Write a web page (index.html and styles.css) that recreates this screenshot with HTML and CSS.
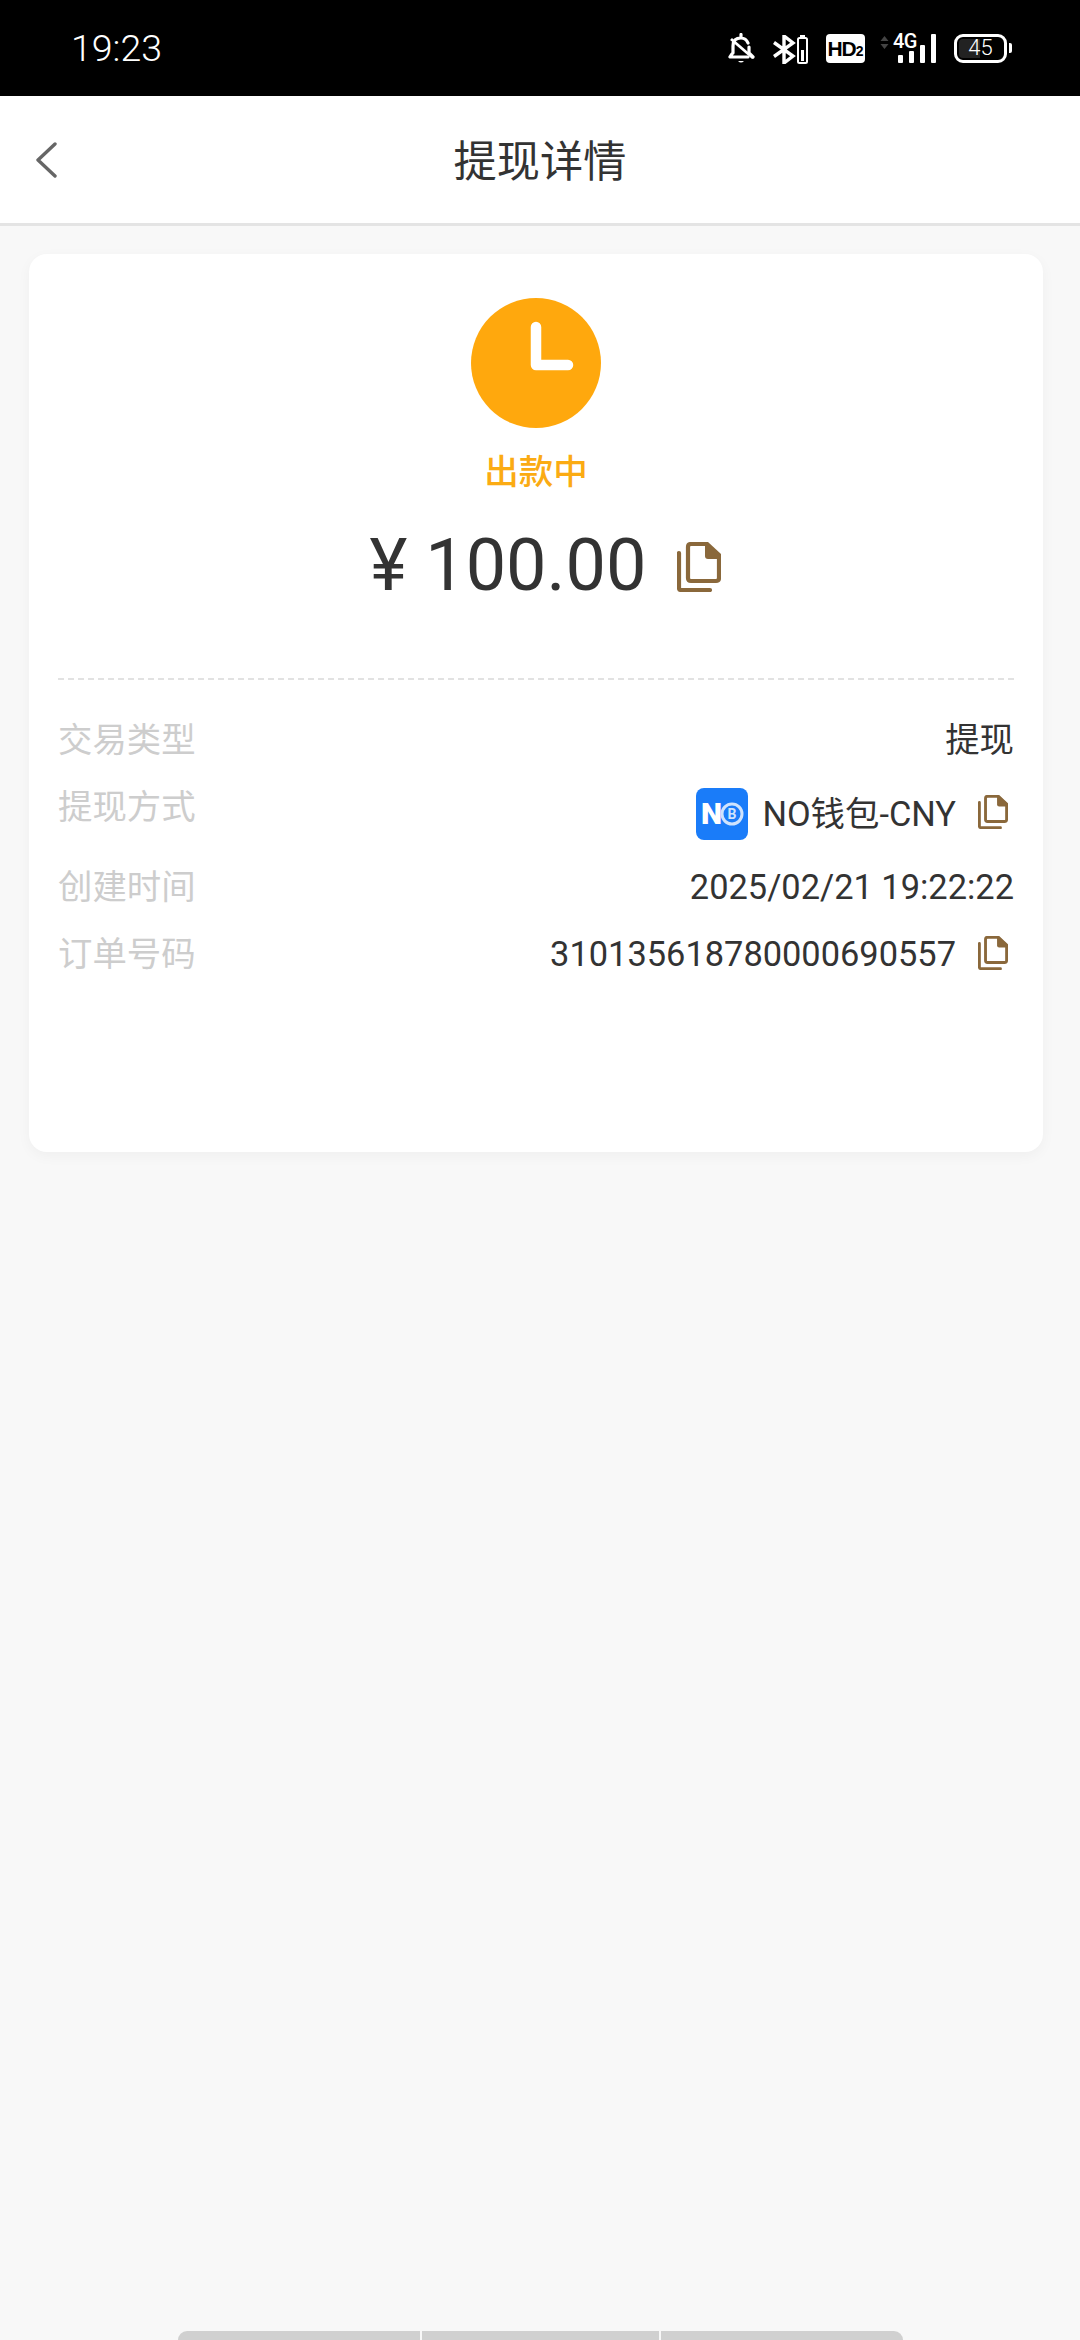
FILE: index.html
```html
<!DOCTYPE html>
<html lang="zh-CN">
<head>
<meta charset="utf-8">
<title>提现详情</title>
<link rel="stylesheet" href="styles.css">
</head>
<body>
<svg class="defs" width="0" height="0" aria-hidden="true">
  <symbol id="copy" viewBox="0 0 44 50">
    <path d="M2 11V46Q2 48 4 48H33" fill="none" stroke="currentColor" stroke-width="4.200" stroke-linecap="round"/>
    <path d="M11 5Q11 2 14 2H29L42 14V36Q42 39 39 39H14Q11 39 11 36Z" fill="none" stroke="currentColor" stroke-width="4.200" stroke-linejoin="round"/>
    <path d="M28 0H31L44 12V17H31Q28 17 28 14Z" fill="currentColor"/>
  </symbol>
</svg>
<div class="page">
  <header class="status">
    <span class="clock">19:23</span>
    <div class="indicators">
      <svg class="ic-bell" width="27" height="31" viewBox="0 0 27 31"><path d="M13 1.500V4M5 20V13Q5 5 13 5Q18 5 20 10M21 14V20L25 24M4 21L2 24H20" fill="none" stroke="#fff" stroke-width="3.200" stroke-linecap="round" stroke-linejoin="round"/><path d="M3 6L25 25" stroke="#fff" stroke-width="2.800"/><path d="M10 28Q13 31 16 28Z" fill="#fff"/></svg>
      <svg class="ic-bt" width="35" height="29" viewBox="0 0 35 29"><path d="M1 7.500L20 21L11 28V1L20 8L1 21.500" fill="none" stroke="#fff" stroke-width="3.400"/><rect x="25" y="3" width="9" height="25" rx="1.500" fill="none" stroke="#fff" stroke-width="2"/><rect x="27" y="0" width="5" height="2" fill="#fff"/><rect x="28" y="15" width="3" height="11" fill="#fff"/></svg>
      <span class="hd">HD<small>2</small></span>
      <div class="signal">
        <svg class="arrows" width="9" height="15" viewBox="0 0 9 15"><path d="M0.500 6L4.500 1L8.500 6ZM0.500 9L4.500 14L8.500 9Z" fill="#444"/></svg>
        <span class="net">4G</span>
        <div class="bars"><i class="b1"></i><i class="b2"></i><i class="b3"></i><i class="b4"></i></div>
      </div>
      <div class="battery">
        <div class="cell"><span class="level"></span><span class="pct">45</span></div>
        <span class="tip"></span>
      </div>
    </div>
  </header>

  <nav class="nav">
    <svg class="back" width="22" height="36" viewBox="0 0 22 36"><path d="M20 2L3 18L20 34" fill="none" stroke="#666" stroke-width="3.400" stroke-linecap="round" stroke-linejoin="round"/></svg>
    <h1 class="title">提现详情</h1>
  </nav>

  <main class="content">
    <section class="card">
      <div class="summary">
        <svg class="state" width="130" height="130" viewBox="0 0 130 130"><circle cx="65" cy="65" r="65" fill="#ffa80d"/><path d="M65 29V67H97" fill="none" stroke="#fff" stroke-width="10.500" stroke-linecap="round" stroke-linejoin="round"/></svg>
        <div class="state-text">出款中</div>
        <div class="amount">
          <span class="money">¥ 100.00</span>
          <svg class="copy copy-lg"><use href="#copy"/></svg>
        </div>
      </div>
      <div class="rows">
        <div class="row"><span class="label">交易类型</span><span class="value">提现</span></div>
        <div class="row row-tall">
          <span class="label">提现方式</span>
          <span class="value value-icons">
            <svg class="logo" width="52" height="52" viewBox="0 0 52 52"><rect width="52" height="52" rx="8" fill="#1a7cf9"/><text x="5" y="36" class="logo-n">N</text><circle cx="36" cy="26" r="10" fill="none" stroke="#cfe3fd" stroke-width="3"/><text x="36" y="31" class="logo-b">B</text></svg>
            <span>NO钱包-CNY</span>
            <svg class="copy copy-sm"><use href="#copy"/></svg>
          </span>
        </div>
        <div class="row"><span class="label">创建时间</span><span class="value">2025/02/21 19:22:22</span></div>
        <div class="row">
          <span class="label">订单号码</span>
          <span class="value value-icons"><span>310135618780000690557</span><svg class="copy copy-sm"><use href="#copy"/></svg></span>
        </div>
      </div>
    </section>
  </main>

  <div class="gesture"><i></i><i></i><i></i></div>
</div>
</body>
</html>
```

FILE: styles.css
```css
* { box-sizing: border-box; }
html, body { margin: 0; padding: 0; }
body {
  width: 1080px;
  height: 2340px;
  background: #f8f8f8;
  color: #333;
  font-family: Roboto, "Noto Sans CJK SC", sans-serif;
  overflow: hidden;
}
.defs { position: absolute; }
.page { display: flex; flex-direction: column; height: 2340px; }

.status {
  height: 96px;
  background: #000;
  color: #fff;
  display: flex;
  align-items: center;
  justify-content: space-between;
  padding: 0 68px 0 71px;
  flex: none;
}
.clock { font-size: 37.500px; font-weight: 300; letter-spacing: 0; }
.indicators { display: flex; align-items: center; }
.ic-bell { margin-right: 18px; }
.ic-bt { margin-right: 18px; margin-top: 2px; }
.hd {
  width: 39px;
  height: 29px;
  background: #fff;
  color: #000;
  border-radius: 4px;
  font-family: "Liberation Sans", sans-serif;
  font-weight: 700;
  font-size: 21px;
  letter-spacing: -1px;
  display: flex;
  align-items: baseline;
  justify-content: center;
  line-height: 29px;
  margin-right: 15px;
}
.hd small { font-size: 14px; letter-spacing: 0; }
.signal { position: relative; width: 56px; height: 29px; margin-right: 18px; display: flex; }
.arrows { margin-top: 1px; }
.net {
  font-size: 20px;
  font-weight: 500;
  line-height: 15px;
  margin-left: 4px;
  letter-spacing: -0.5px;
}
.bars {
  position: absolute;
  left: 18px;
  bottom: 0;
  display: flex;
  align-items: flex-end;
  gap: 6px;
}
.bars i { display: block; width: 5px; background: #fff; border-radius: 1px; }
.bars .b1 { height: 8px; }
.bars .b2 { height: 12px; }
.bars .b3 { height: 18px; }
.bars .b4 { height: 29px; }
.battery { display: flex; align-items: center; gap: 2px; }
.cell {
  position: relative;
  width: 53px;
  height: 29px;
  border: 3px solid #fff;
  border-radius: 9px;
  display: flex;
  align-items: center;
  justify-content: center;
  overflow: hidden;
}
.level { position: absolute; left: 2px; top: 2px; bottom: 2px; width: 21px; background: #222; border-radius: 4px 0 0 4px; }
.pct { position: relative; font-size: 22px; font-weight: 300; line-height: 1; }
.tip { width: 3px; height: 10px; background: #fff; border-radius: 0 2px 2px 0; }

.nav {
  position: relative;
  height: 130px;
  background: #fff;
  border-bottom: 3px solid #e4e4e4;
  display: flex;
  align-items: center;
  justify-content: center;
  padding-bottom: 3px;
  flex: none;
}
.back { position: absolute; left: 35px; top: 46px; }
.title { margin: 0; font-size: 43.200px; font-weight: 400; color: #333; }

.content { flex: 1; padding: 28px 37px 0 29px; }
.card {
  height: 898px;
  background: #fff;
  border-radius: 18px;
  box-shadow: 0 4px 14px rgba(0, 0, 0, 0.04);
  padding: 44px 29px 0;
}
.summary {
  display: flex;
  flex-direction: column;
  align-items: center;
  height: 382px;
  border-bottom: 2px dashed #e2e2e2;
}
.state { display: block; }
.state-text {
  margin-top: 22px;
  font-size: 34.500px;
  font-weight: 500;
  line-height: 44px;
  color: #fbab13;
}
.amount {
  display: flex;
  align-items: center;
  margin-top: 28px;
  padding-left: 18px;
}
.money { font-size: 72px; line-height: 88px; color: #333; }
.copy { display: block; color: #8a683b; }
.copy-lg { width: 44px; height: 50px; margin-left: 30px; margin-top: 2px; }
.copy-sm { width: 30px; height: 34px; margin-left: 22px; margin-right: 6px; margin-top: -4px; }

.rows { display: flex; flex-direction: column; gap: 20px; padding-top: 37px; }
.row {
  display: flex;
  justify-content: space-between;
  align-items: flex-start;
  font-size: 34.400px;
  line-height: 47px;
  min-height: 47px;
}
.row-tall { min-height: 60px; }
.label { color: #cdcdcd; }
.value { color: #333; }
.value-icons { display: flex; align-items: center; height: 47px; }
.row-tall .value-icons { height: 60px; }
.logo { margin-right: 14px; display: block; }
.logo-n { font-family: Roboto, sans-serif; font-weight: 900; font-size: 30px; fill: #fff; }
.logo-b { font-family: Roboto, sans-serif; font-weight: 700; font-size: 14px; fill: #cfe3fd; text-anchor: middle; }

.gesture {
  flex: none;
  align-self: flex-start;
  margin-left: 178px;
  width: 725px;
  height: 9px;
  display: grid;
  grid-template-columns: 242fr 237fr 242fr;
  gap: 2px;
  border-radius: 9px 9px 0 0;
  overflow: hidden;
}
.gesture i { background: #d0d0d0; }
```
